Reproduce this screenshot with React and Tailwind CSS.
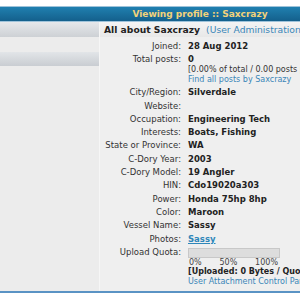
const rows = [
  { label: "City/Region:", value: "Silverdale" },
  { label: "Website:", value: "" },
  { label: "Occupation:", value: "Engineering Tech" },
  { label: "Interests:", value: "Boats, Fishing" },
  { label: "State or Province:", value: "WA" },
  { label: "C-Dory Year:", value: "2003" },
  { label: "C-Dory Model:", value: "19 Angler" },
  { label: "HIN:", value: "Cdo19020a303" },
  { label: "Power:", value: "Honda 75hp 8hp" },
  { label: "Color:", value: "Maroon" },
  { label: "Vessel Name:", value: "Sassy" },
];

const Row = ({ label, children }) => (
  <div className="flex">
    <div className="w-[84px] shrink-0 pr-[3px] text-right text-[#333333] whitespace-nowrap">{label}</div>
    <div className="pl-[4px] font-bold text-[#222222] whitespace-nowrap">{children}</div>
  </div>
);

export default function App() {
  return (
    <div
      className="w-[300px] h-[300px] overflow-hidden bg-white text-[8.5px] leading-[13.3px]"
      style={{ fontFamily: '"DejaVu Sans", Verdana, sans-serif' }}
    >
      <div className="w-[400px] mt-[6px]">
        {/* Title bar */}
        <div className="border-y border-[#9fc3da] bg-gradient-to-b from-[#2080b0] to-[#14608c] h-[16px] flex items-center justify-center">
          <span className="font-bold text-[#f2d27a] text-[9px] leading-none">Viewing profile :: Saxcrazy</span>
        </div>

        <div className="flex border-b-2 border-[#5a93c4]">
          {/* Left column */}
          <div className="w-[100px] shrink-0 bg-[#ececec] border-r border-[#f6f6f6]">
            <div className="h-[15px] bg-gradient-to-b from-[#e6e8eb] to-[#cdd1d5]" />
            <div className="h-[15px]" />
            <div className="h-[14px] bg-gradient-to-b from-[#e2e5e8] to-[#c9cdd2]" />
          </div>

          {/* Right column */}
          <div className="flex-1 bg-[#efefef]">
            <div className="h-[15px] bg-gradient-to-b from-[#f4f4f4] to-[#e8e8e8] flex items-center pl-[4px] whitespace-nowrap text-[9.2px] leading-none">
              <span className="font-bold text-[#222222]">All about Saxcrazy</span>
              <span className="ml-[6px] text-[#3a86b8]">(User Administration for Saxcrazy)</span>
            </div>

            <div className="pt-[3px] pb-[4px]">
              <Row label="Joined:">28 Aug 2012</Row>
              <div className="flex">
                <div className="w-[84px] shrink-0 pr-[3px] text-right text-[#333333] leading-[11px] pt-[1px]">Total posts:</div>
                <div className="pl-[4px] whitespace-nowrap pb-[1px]">
                  <div className="font-bold text-[#222222] leading-[11px] pt-[1px]">0</div>
                  <div className="text-[8px] leading-[10px] text-[#333333]">[0.00% of total / 0.00 posts per day]</div>
                  <div className="text-[8px] leading-[10px] text-[#3a86b8]">Find all posts by Saxcrazy</div>
                </div>
              </div>
              {rows.map((r) => (
                <Row key={r.label} label={r.label}>{r.value}</Row>
              ))}
              <Row label="Photos:">
                <span className="text-[#2f87ba] underline">Sassy</span>
              </Row>
              <div className="flex">
                <div className="w-[84px] shrink-0 pr-[3px] text-right text-[#333333] whitespace-nowrap">Upload Quota:</div>
                <div className="pl-[4px] pt-[2px]">
                  <div className="w-[92px] border border-[#c8c8c8] bg-[#dddddd] h-[10px]" />
                  <div className="w-[92px] flex justify-between text-[8px] leading-[9px] text-[#444444] pl-[1px] pr-[2px]">
                    <span>0%</span>
                    <span>50%</span>
                    <span>100%</span>
                  </div>
                  <div className="text-[8px] leading-[10px] font-bold text-[#222222] whitespace-nowrap">[Uploaded: 0 Bytes / Quota: 0 Bytes]</div>
                  <div className="text-[8px] leading-[10px] text-[#3a86b8] whitespace-nowrap">User Attachment Control Panel</div>
                </div>
              </div>
            </div>
          </div>
        </div>
      </div>
    </div>
  );
}
